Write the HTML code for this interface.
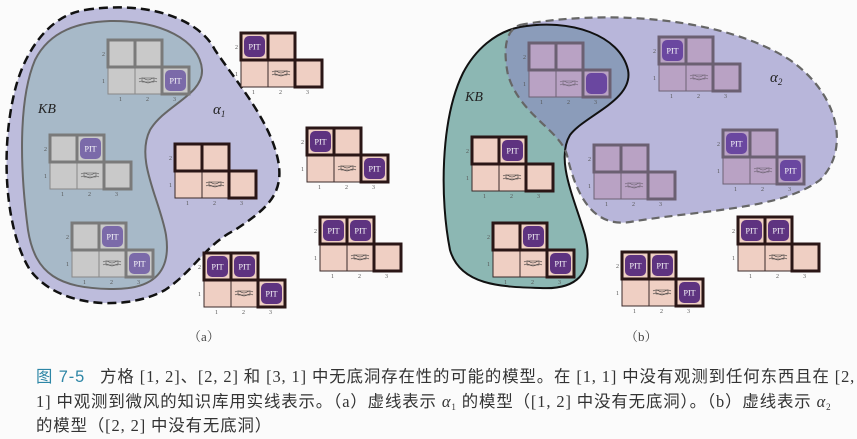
<!DOCTYPE html>
<html><head><meta charset="utf-8">
<style>
html,body{margin:0;padding:0;background:#fbfbfb;}
body{width:857px;height:437px;overflow:hidden;position:relative;font-family:"Liberation Serif","Noto Serif CJK SC",serif;}
svg{position:absolute;left:0;top:0;}
.cap{position:absolute;left:36px;top:365px;width:820px;font-size:16.4px;line-height:24.5px;letter-spacing:0.9px;color:#333;font-family:"Liberation Serif","Noto Sans CJK SC",sans-serif;white-space:nowrap;}
.cap b{color:#2d86a6;font-weight:normal;font-family:"Liberation Sans","Noto Sans CJK SC",sans-serif;}
.cap i{font-family:"Liberation Serif",serif;}
.cap sub{font-size:9px;line-height:0;vertical-align:-3px;}
.lb{font-size:6px;fill:#555;font-family:"Liberation Serif",serif;}
.pt{font-size:8px;fill:#fff;font-family:"Liberation Serif",serif;text-anchor:middle;}
</style></head><body>
<svg width="857" height="437" viewBox="0 0 857 437">
<defs>
<clipPath id="a2c"><path d="M 520 25 C 600 10, 720 15, 790 60 C 840 95, 850 150, 820 180 C 780 210, 700 210, 630 222 C 590 228, 575 190, 567 155 C 560 130, 520 115, 508 75 C 503 50, 505 30, 520 25 Z"/></clipPath>
<g id="bz"><path d="M31 39 q3 -2 6 0 t6 0 t6 0 M31 42 q3 -2 6 0 t6 0 t6 0" fill="none" stroke="#333" stroke-width="0.6"/><rect x="34" y="38" width="12" height="4" fill="none" stroke="#333" stroke-width="0.5"/></g>
<g id="pink">
<rect x="0" y="0" width="27" height="27" fill="#efcfc3"/><rect x="27" y="0" width="27" height="27" fill="#efcfc3"/>
<rect x="0" y="27" width="27" height="27" fill="#efcfc3" stroke="#3a2a2a" stroke-width="1"/><rect x="27" y="27" width="27" height="27" fill="#efcfc3" stroke="#3a2a2a" stroke-width="1"/><rect x="54" y="27" width="27" height="27" fill="#efcfc3"/>
<rect x="0" y="0" width="27" height="27" fill="none" stroke="#2a1616" stroke-width="3"/><rect x="27" y="0" width="27" height="27" fill="none" stroke="#2a1616" stroke-width="3"/><rect x="54" y="27" width="27" height="27" fill="none" stroke="#2a1616" stroke-width="3"/>
<use href="#bz"/></g>
<g id="gray">
<rect x="0" y="0" width="27" height="27" fill="#c9c9c9"/><rect x="27" y="0" width="27" height="27" fill="#c9c9c9"/>
<rect x="0" y="27" width="27" height="27" fill="#c9c9c9" stroke="#888" stroke-width="1"/><rect x="27" y="27" width="27" height="27" fill="#c9c9c9" stroke="#888" stroke-width="1"/><rect x="54" y="27" width="27" height="27" fill="#c9c9c9"/>
<rect x="0" y="0" width="27" height="27" fill="none" stroke="#7a7a7a" stroke-width="3"/><rect x="27" y="0" width="27" height="27" fill="none" stroke="#7a7a7a" stroke-width="3"/><rect x="54" y="27" width="27" height="27" fill="none" stroke="#7a7a7a" stroke-width="3"/>
<use href="#bz" opacity="0.8"/></g>
<g id="purp">
<rect x="0" y="0" width="27" height="27" fill="#b9a2c4"/><rect x="27" y="0" width="27" height="27" fill="#b9a2c4"/>
<rect x="0" y="27" width="27" height="27" fill="#b9a2c4" stroke="#6d6274" stroke-width="1"/><rect x="27" y="27" width="27" height="27" fill="#b9a2c4" stroke="#6d6274" stroke-width="1"/><rect x="54" y="27" width="27" height="27" fill="#b9a2c4"/>
<rect x="0" y="0" width="27" height="27" fill="none" stroke="#6b6072" stroke-width="3"/><rect x="27" y="0" width="27" height="27" fill="none" stroke="#6b6072" stroke-width="3"/><rect x="54" y="27" width="27" height="27" fill="none" stroke="#6b6072" stroke-width="3"/>
<use href="#bz" opacity="0.6"/></g>
</defs>

<path d="M 85 10 C 150 0, 200 20, 215 50 C 235 80, 270 120, 278 160 C 285 195, 265 210, 235 230 C 205 245, 195 270, 165 290 C 130 310, 60 310, 30 270 C 5 230, 0 150, 15 90 C 25 50, 50 15, 85 10 Z" fill="#bdbcdc" stroke="#111" stroke-width="2.5" stroke-dasharray="9,5"/>
<path d="M 110 21 C 160 20, 200 40, 202 70 C 203 95, 165 105, 150 130 C 135 160, 160 200, 166 235 C 172 275, 150 290, 110 289 C 60 288, 35 275, 28 230 C 20 170, 18 100, 35 60 C 50 30, 80 22, 110 21 Z" fill="#a7b9c8" stroke="#666" stroke-width="2"/>
<text x="38" y="113" font-size="14" font-style="italic" fill="#222">KB</text>
<text x="213" y="114" font-size="15" font-style="italic" fill="#222">α<tspan font-size="9" dy="3">1</tspan></text>

<path d="M 520 25 C 600 10, 720 15, 790 60 C 840 95, 850 150, 820 180 C 780 210, 700 210, 630 222 C 590 228, 575 190, 567 155 C 560 130, 520 115, 508 75 C 503 50, 505 30, 520 25 Z" fill="#b8b6da"/>
<path d="M 520 27 C 570 18, 620 35, 628 70 C 634 100, 585 115, 570 135 C 555 160, 575 200, 585 235 C 595 275, 575 290, 540 288 C 500 287, 460 285, 450 250 C 440 200, 440 120, 463 73 C 475 50, 495 32, 520 27 Z" fill="#8cb7b3"/>
<path d="M 520 27 C 570 18, 620 35, 628 70 C 634 100, 585 115, 570 135 C 555 160, 575 200, 585 235 C 595 275, 575 290, 540 288 C 500 287, 460 285, 450 250 C 440 200, 440 120, 463 73 C 475 50, 495 32, 520 27 Z" fill="#8b9cba" clip-path="url(#a2c)"/>
<path d="M 520 27 C 570 18, 620 35, 628 70 C 634 100, 585 115, 570 135 C 555 160, 575 200, 585 235 C 595 275, 575 290, 540 288 C 500 287, 460 285, 450 250 C 440 200, 440 120, 463 73 C 475 50, 495 32, 520 27 Z" fill="none" stroke="#111" stroke-width="2"/>
<path d="M 520 25 C 600 10, 720 15, 790 60 C 840 95, 850 150, 820 180 C 780 210, 700 210, 630 222 C 590 228, 575 190, 567 155 C 560 130, 520 115, 508 75 C 503 50, 505 30, 520 25 Z" fill="none" stroke="#666" stroke-width="2.2" stroke-dasharray="8,5"/>
<text x="465" y="101" font-size="14" font-style="italic" fill="#222">KB</text>
<text x="770" y="82" font-size="15" font-style="italic" fill="#222">α<tspan font-size="9" dy="3">2</tspan></text>

<g transform="translate(108,40)"><use href="#gray"/>
<rect x="57" y="30" width="21" height="21" rx="5" fill="#7b6aa9"/><text class="pt" x="67.5" y="43.5">PIT</text>
<text class="lb" x="-6" y="16">2</text><text class="lb" x="-6" y="43">1</text><text class="lb" x="11" y="61">1</text><text class="lb" x="38" y="61">2</text><text class="lb" x="65" y="61">3</text></g>

<g transform="translate(50,135)"><use href="#gray"/>
<rect x="30" y="3" width="21" height="21" rx="5" fill="#7b6aa9"/><text class="pt" x="40.5" y="16.5">PIT</text>
<text class="lb" x="-6" y="16">2</text><text class="lb" x="-6" y="43">1</text><text class="lb" x="11" y="61">1</text><text class="lb" x="38" y="61">2</text><text class="lb" x="65" y="61">3</text></g>

<g transform="translate(72,223)"><use href="#gray"/>
<rect x="30" y="3" width="21" height="21" rx="5" fill="#7b6aa9"/><text class="pt" x="40.5" y="16.5">PIT</text>
<rect x="57" y="30" width="21" height="21" rx="5" fill="#7b6aa9"/><text class="pt" x="67.5" y="43.5">PIT</text>
<text class="lb" x="-6" y="16">2</text><text class="lb" x="-6" y="43">1</text><text class="lb" x="11" y="61">1</text><text class="lb" x="38" y="61">2</text><text class="lb" x="65" y="61">3</text></g>

<g transform="translate(241,33)"><use href="#pink"/>
<rect x="3" y="3" width="21" height="21" rx="5" fill="#5e3380"/><text class="pt" x="13.5" y="16.5">PIT</text>
<text class="lb" x="-6" y="16">2</text><text class="lb" x="-6" y="43">1</text><text class="lb" x="11" y="61">1</text><text class="lb" x="38" y="61">2</text><text class="lb" x="65" y="61">3</text></g>

<g transform="translate(175,144)"><use href="#pink"/>
<text class="lb" x="-6" y="16">2</text><text class="lb" x="-6" y="43">1</text><text class="lb" x="11" y="61">1</text><text class="lb" x="38" y="61">2</text><text class="lb" x="65" y="61">3</text></g>

<g transform="translate(307,128)"><use href="#pink"/>
<rect x="3" y="3" width="21" height="21" rx="5" fill="#5e3380"/><text class="pt" x="13.5" y="16.5">PIT</text>
<rect x="57" y="30" width="21" height="21" rx="5" fill="#5e3380"/><text class="pt" x="67.5" y="43.5">PIT</text>
<text class="lb" x="-6" y="16">2</text><text class="lb" x="-6" y="43">1</text><text class="lb" x="11" y="61">1</text><text class="lb" x="38" y="61">2</text><text class="lb" x="65" y="61">3</text></g>

<g transform="translate(320,217)"><use href="#pink"/>
<rect x="3" y="3" width="21" height="21" rx="5" fill="#5e3380"/><text class="pt" x="13.5" y="16.5">PIT</text>
<rect x="30" y="3" width="21" height="21" rx="5" fill="#5e3380"/><text class="pt" x="40.5" y="16.5">PIT</text>
<text class="lb" x="-6" y="16">2</text><text class="lb" x="-6" y="43">1</text><text class="lb" x="11" y="61">1</text><text class="lb" x="38" y="61">2</text><text class="lb" x="65" y="61">3</text></g>

<g transform="translate(204,253)"><use href="#pink"/>
<rect x="3" y="3" width="21" height="21" rx="5" fill="#5e3380"/><text class="pt" x="13.5" y="16.5">PIT</text>
<rect x="30" y="3" width="21" height="21" rx="5" fill="#5e3380"/><text class="pt" x="40.5" y="16.5">PIT</text>
<rect x="57" y="30" width="21" height="21" rx="5" fill="#5e3380"/><text class="pt" x="67.5" y="43.5">PIT</text>
<text class="lb" x="-6" y="16">2</text><text class="lb" x="-6" y="43">1</text><text class="lb" x="11" y="61">1</text><text class="lb" x="38" y="61">2</text><text class="lb" x="65" y="61">3</text></g>

<g transform="translate(529,43)"><use href="#purp"/>
<rect x="57" y="30" width="21" height="21" rx="5" fill="#6a47a0"/>
<text class="lb" x="-6" y="16">2</text><text class="lb" x="-6" y="43">1</text><text class="lb" x="11" y="61">1</text><text class="lb" x="38" y="61">2</text><text class="lb" x="65" y="61">3</text></g>

<g transform="translate(659,37)"><use href="#purp"/>
<rect x="3" y="3" width="21" height="21" rx="5" fill="#6a47a0"/><text class="pt" x="13.5" y="16.5">PIT</text>
<text class="lb" x="-6" y="16">2</text><text class="lb" x="-6" y="43">1</text><text class="lb" x="11" y="61">1</text><text class="lb" x="38" y="61">2</text><text class="lb" x="65" y="61">3</text></g>

<g transform="translate(594,145)"><use href="#purp"/>
<text class="lb" x="-6" y="16">2</text><text class="lb" x="-6" y="43">1</text><text class="lb" x="11" y="61">1</text><text class="lb" x="38" y="61">2</text><text class="lb" x="65" y="61">3</text></g>

<g transform="translate(723,130)"><use href="#purp"/>
<rect x="3" y="3" width="21" height="21" rx="5" fill="#6a47a0"/><text class="pt" x="13.5" y="16.5">PIT</text>
<rect x="57" y="30" width="21" height="21" rx="5" fill="#6a47a0"/><text class="pt" x="67.5" y="43.5">PIT</text>
<text class="lb" x="-6" y="16">2</text><text class="lb" x="-6" y="43">1</text><text class="lb" x="11" y="61">1</text><text class="lb" x="38" y="61">2</text><text class="lb" x="65" y="61">3</text></g>

<g transform="translate(472,137)"><use href="#pink"/>
<rect x="30" y="3" width="21" height="21" rx="5" fill="#5e3380"/><text class="pt" x="40.5" y="16.5">PIT</text>
<text class="lb" x="-6" y="16">2</text><text class="lb" x="-6" y="43">1</text><text class="lb" x="11" y="61">1</text><text class="lb" x="38" y="61">2</text><text class="lb" x="65" y="61">3</text></g>

<g transform="translate(493,223)"><use href="#pink"/>
<rect x="30" y="3" width="21" height="21" rx="5" fill="#5e3380"/><text class="pt" x="40.5" y="16.5">PIT</text>
<rect x="57" y="30" width="21" height="21" rx="5" fill="#5e3380"/><text class="pt" x="67.5" y="43.5">PIT</text>
<text class="lb" x="-6" y="16">2</text><text class="lb" x="-6" y="43">1</text><text class="lb" x="11" y="61">1</text><text class="lb" x="38" y="61">2</text><text class="lb" x="65" y="61">3</text></g>

<g transform="translate(622,252)"><use href="#pink"/>
<rect x="3" y="3" width="21" height="21" rx="5" fill="#5e3380"/><text class="pt" x="13.5" y="16.5">PIT</text>
<rect x="30" y="3" width="21" height="21" rx="5" fill="#5e3380"/><text class="pt" x="40.5" y="16.5">PIT</text>
<rect x="57" y="30" width="21" height="21" rx="5" fill="#5e3380"/><text class="pt" x="67.5" y="43.5">PIT</text>
<text class="lb" x="-6" y="16">2</text><text class="lb" x="-6" y="43">1</text><text class="lb" x="11" y="61">1</text><text class="lb" x="38" y="61">2</text><text class="lb" x="65" y="61">3</text></g>

<g transform="translate(738,217)"><use href="#pink"/>
<rect x="3" y="3" width="21" height="21" rx="5" fill="#5e3380"/><text class="pt" x="13.5" y="16.5">PIT</text>
<rect x="30" y="3" width="21" height="21" rx="5" fill="#5e3380"/><text class="pt" x="40.5" y="16.5">PIT</text>
<text class="lb" x="-6" y="16">2</text><text class="lb" x="-6" y="43">1</text><text class="lb" x="11" y="61">1</text><text class="lb" x="38" y="61">2</text><text class="lb" x="65" y="61">3</text></g>

<text x="188" y="341" font-size="13" fill="#444" font-family="Liberation Serif, Noto Serif CJK SC, serif">（a）</text>
<text x="625" y="341" font-size="13" fill="#444" font-family="Liberation Serif, Noto Serif CJK SC, serif">（b）</text>
</svg>
<div class="cap"><b>图 7-5</b>&nbsp;&nbsp; 方格 [1, 2]、[2, 2] 和 [3, 1] 中无底洞存在性的可能的模型。在 [1, 1] 中没有观测到任何东西且在 [2,<br>1] 中观测到微风的知识库用实线表示。（a）虚线表示 <i>α</i><sub>1</sub> 的模型（[1, 2] 中没有无底洞）。（b）虚线表示 <i>α</i><sub>2</sub><br>的模型（[2, 2] 中没有无底洞）</div>
</body></html>
